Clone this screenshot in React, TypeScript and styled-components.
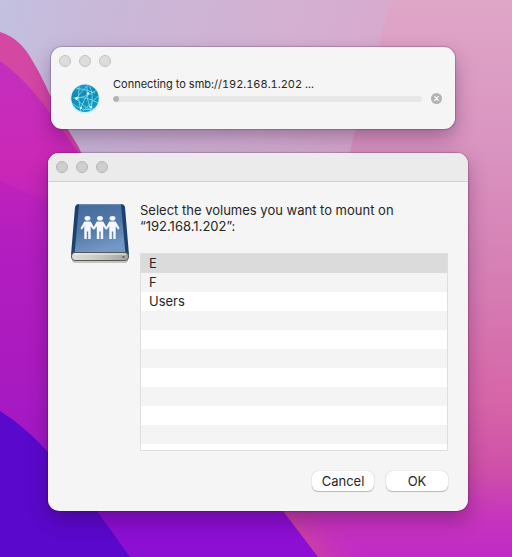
import React, { useState } from "react";
import styled, { createGlobalStyle } from "styled-components";

const GlobalStyle = createGlobalStyle`
  *, *::before, *::after { box-sizing: border-box; }
  body {
    margin: 0;
    font-family: Inter, "Liberation Sans", sans-serif;
    color: #262626;
  }
  button { font: inherit; color: inherit; padding: 0; border: 0; background: none; }
`;

const Desktop = styled.main`
  position: relative;
  isolation: isolate;
  min-height: 100vh;
  display: flex;
  flex-direction: column;
  gap: 24px;
  padding: 47px 44px 46px 48px;
  overflow: hidden;
`;

const WallpaperArt = styled.svg`
  position: absolute;
  inset: 0;
  z-index: -1;
  width: 100%;
  height: 100%;
`;

const Window = styled.section<{ $inset?: boolean }>`
  background: #f5f5f5;
  border-radius: 11px;
  margin: ${(p) => (p.$inset ? "0 13px 0 3px" : "0")};
  overflow: hidden;
  box-shadow: 0 0 1px 1px rgba(40, 0, 50, 0.2), 0 9px 20px rgba(40, 0, 50, 0.32);
`;

const TitleBar = styled.header<{ $filled?: boolean }>`
  display: flex;
  gap: 8px;
  padding: 8px;
  height: ${(p) => (p.$filled ? "29px" : "28px")};
  background: ${(p) => (p.$filled ? "#ebebeb" : "transparent")};
  border-bottom: ${(p) => (p.$filled ? "1px solid #d0d0d0" : "0")};
`;

const Light = styled.button<{ $dark?: boolean }>`
  width: 12px;
  height: 12px;
  border-radius: 50%;
  && { border: 1px solid ${(p) => (p.$dark ? "#b5b5b5" : "#c1c1c1")}; }
  && { background: ${(p) => (p.$dark ? "#cecece" : "#dddddd")}; }
`;

const ProgressBody = styled.div`
  display: flex;
  gap: 14px;
  padding: 2px 13px 15px 20px;
`;

const ProgressColumn = styled.div`
  flex: 1;
  display: flex;
  flex-direction: column;
`;

const StatusLabel = styled.label`
  font-size: 11px;
  line-height: 14px;
  font-variant-numeric: tabular-nums;
`;

const ProgressLine = styled.div`
  display: flex;
  align-items: center;
  gap: 9px;
  height: 15px;
`;

const Bar = styled.progress`
  appearance: none;
  flex: 1;
  min-width: 0;
  height: 6px;
  border: 0;
  border-radius: 3px;
  overflow: hidden;
  background: #e7e7e7;
  &::-webkit-progress-bar { background: #e7e7e7; border-radius: 3px; }
  &::-webkit-progress-value { background: #b4b4b4; border-radius: 3px; }
`;

const StopButton = styled.button`
  display: flex;
  width: 11px;
  height: 11px;
`;

const GlobeArt = styled.svg`
  width: 28px;
  height: 30px;
  margin-top: 7px;
  overflow: visible;
`;

const DialogBody = styled.div`
  display: flex;
  gap: 10px;
  padding: 20px 20px 20px 22px;
`;

const DriveArt = styled.svg`
  flex: none;
  width: 60px;
  height: 64px;
  overflow: visible;
`;

const DialogColumn = styled.form`
  flex: 1;
  min-width: 0;
`;

const Prompt = styled.h1`
  margin: 0 0 19px;
  font-size: 13px;
  font-weight: 400;
  line-height: 16px;
`;

const VolumeList = styled.ul`
  list-style: none;
  margin: 0;
  padding: 0;
  height: 198px;
  overflow: auto;
  border: 1px solid #dedede;
  background: repeating-linear-gradient(#fff 0 19px, #f4f4f4 19px 38px);
`;

const VolumeRow = styled.button<{ $selected: boolean }>`
  display: block;
  width: 100%;
  height: 19px;
  && { padding: 0 8px; }
  && { background: ${(p) => (p.$selected ? "#dbdbdb" : "transparent")}; }
  font-size: 13px;
  line-height: 19px;
  text-align: left;
`;

const Actions = styled.div`
  display: flex;
  justify-content: flex-end;
  gap: 12px;
  padding-top: 20px;
`;

const PushButton = styled.button`
  width: 62px;
  height: 20px;
  border-radius: 6px;
  && { background: #fff; font-size: 13px; line-height: 20px; }
  box-shadow: 0 0 1px rgba(0, 0, 0, 0.3), 0 1px 1px rgba(0, 0, 0, 0.22);
`;

function Wallpaper() {
  return (
    <WallpaperArt viewBox="0 0 512 557" preserveAspectRatio="none" aria-hidden="true">
      <defs>
        <linearGradient id="sky" gradientUnits="userSpaceOnUse" x1="0" y1="0" x2="400" y2="100">
          <stop offset="0" stopColor="#c3c0e0" />
          <stop offset="0.25" stopColor="#c9b8d8" />
          <stop offset="0.7" stopColor="#d4b0d2" />
          <stop offset="1" stopColor="#d8a8cd" />
        </linearGradient>
        <linearGradient id="rose" x1="0" y1="0" x2="0" y2="1">
          <stop offset="0" stopColor="#dfa6c7" />
          <stop offset="0.25" stopColor="#da95c1" />
          <stop offset="0.5" stopColor="#d67eb4" />
          <stop offset="0.72" stopColor="#d765a8" />
          <stop offset="0.84" stopColor="#cf51a8" />
          <stop offset="0.93" stopColor="#c634bd" />
          <stop offset="1" stopColor="#c02bc6" />
        </linearGradient>
        <linearGradient id="ridge" x1="0" y1="0" x2="0.4" y2="1">
          <stop offset="0" stopColor="#d548a2" />
          <stop offset="1" stopColor="#cf3eaf" />
        </linearGradient>
        <linearGradient id="hill" gradientUnits="userSpaceOnUse" x1="0" y1="60" x2="0" y2="440">
          <stop offset="0" stopColor="#c42fbd" />
          <stop offset="0.28" stopColor="#cb27b7" />
          <stop offset="0.5" stopColor="#b31fbe" />
          <stop offset="0.8" stopColor="#a91bbd" />
          <stop offset="1" stopColor="#9d17c8" />
        </linearGradient>
        <linearGradient id="ember" gradientUnits="userSpaceOnUse" x1="300" y1="545" x2="335" y2="518">
          <stop offset="0" stopColor="#cb439a" />
          <stop offset="1" stopColor="#c634bd" stopOpacity="0" />
        </linearGradient>
      </defs>
      <path fill="url(#sky)" d="M0 0H512V557H0Z" />
      <path fill="url(#rose)" d="M393 0Q384 18 380 43Q366 94 352 143L270 500L310 557H512V0Z" />
      <path fill="url(#ember)" d="M270 495L400 495L430 557H316Z" />
      <path fill="url(#ridge)" d="M0 32Q20 38 32 60Q46 83 56 110L78 146L120 230V400H0Z" />
      <path fill="url(#hill)" d="M0 61Q25 78 50 113L78 152L130 260V500H0Z" />
      <path fill="#b119c4" fillOpacity="0.3" d="M0 181L60 208V440H0Z" />
      <path fill="#8c0fd3" d="M60 460H243L283 511L318 557H80Z" />
      <path fill="#5a08cc" d="M0 411Q24 426 46 450Q76 479 97 511L130 557H0Z" />
    </WallpaperArt>
  );
}

function Globe() {
  return (
    <GlobeArt viewBox="0 0 28 30" aria-hidden="true">
      <defs>
        <linearGradient id="ocean" x1="0" y1="0" x2="0.3" y2="1">
          <stop offset="0" stopColor="#22a0dc" />
          <stop offset="0.4" stopColor="#1488b0" />
          <stop offset="1" stopColor="#159bc4" />
        </linearGradient>
        <clipPath id="globeClip"><circle cx="14" cy="14.5" r="13.6" /></clipPath>
      </defs>
      <circle cx="14" cy="15" r="14.4" fill="#c2f4fb" />
      <circle cx="14" cy="14.3" r="13.7" fill="url(#ocean)" />
      <g clipPath="url(#globeClip)" fill="none" stroke="#7fe0f0" strokeWidth="0.8">
        <path d="M2 14Q12 15 26 6M8 2Q6 14 10 28M18 0Q9 9 5 15Q12 22 21 27M18 1Q24 11 19 28M5 14Q15 12 27 19M12 27Q20 20 27 12M16 3Q15 14 19 24M9 26Q13 15 17 10M1 19Q12 29 25 24M4 4Q14 5 24 9" />
      </g>
      <g fill="#dcffff">
        <circle cx="5.5" cy="14.5" r="1.4" />
        <circle cx="17" cy="9.5" r="1.3" />
        <circle cx="20" cy="23" r="1.3" />
        <circle cx="10" cy="24" r="1.1" />
      </g>
    </GlobeArt>
  );
}

function Person({ x }: { x: number }) {
  return (
    <g transform={`translate(${x} 1)`}>
      <ellipse cx="0" cy="15.300" rx="2.900" ry="2.400" />
      <path d="M-3.200 18.500H3.200L7 25.300L5.700 26.700L3.200 23.300V36H0.700V28.500H-0.700V36H-3.200V23.300L-5.700 26.700L-7 25.300Z" />
    </g>
  );
}

function SharedDrive() {
  return (
    <DriveArt viewBox="0 0 60 64" aria-hidden="true">
      <defs>
        <linearGradient id="cover" x1="0" y1="0" x2="0.3" y2="1">
          <stop offset="0" stopColor="#456b9b" />
          <stop offset="0.55" stopColor="#5379aa" />
          <stop offset="1" stopColor="#7498c6" />
        </linearGradient>
        <linearGradient id="metal" x1="0" y1="0" x2="1" y2="0">
          <stop offset="0" stopColor="#dedfdc" />
          <stop offset="0.5" stopColor="#c4c6c1" />
          <stop offset="1" stopColor="#a2a49f" />
        </linearGradient>
      </defs>
      <rect x="2" y="55" width="56" height="6" rx="3" fill="#000" opacity="0.2" />
      <path fill="#1d416f" d="M9 2H51Q54 2 55 5L59 53H1L5 5Q6 2 9 2Z" />
      <path fill="url(#cover)" d="M9 3H51L55.500 52H4.500Z" />
      <path stroke="#8ba8ca" strokeWidth="0.8" d="M9 2.600H51" />
      <rect x="1.500" y="50.500" width="57" height="8" rx="3.500" fill="url(#metal)" stroke="#555856" />
      <path stroke="#f2f3f0" strokeWidth="1" d="M4 52H56" />
      <circle cx="53.500" cy="55" r="1.100" fill="#555" />
      <g fill="#f6f7ff">
        <Person x={17.5} />
        <Person x={30} />
        <Person x={42.5} />
      </g>
    </DriveArt>
  );
}

function WindowLights({ dark }: { dark?: boolean }) {
  return (
    <>
      {["Close", "Minimize", "Zoom"].map((name) => (
        <Light key={name} type="button" aria-label={name} $dark={dark} />
      ))}
    </>
  );
}

const volumes = ["E", "F", "Users"];

export default function App() {
  const [selected, setSelected] = useState("E");
  return (
    <>
      <GlobalStyle />
      <Desktop>
        <Wallpaper />
        <Window $inset>
          <TitleBar><WindowLights /></TitleBar>
          <ProgressBody>
            <Globe />
            <ProgressColumn>
              <StatusLabel htmlFor="connection">Connecting to smb://192.168.1.202 ...</StatusLabel>
              <ProgressLine>
                <Bar id="connection" max={100} value={2} />
                <StopButton type="button" aria-label="Stop connecting">
                  <svg width="11" height="11" viewBox="0 0 11 11" aria-hidden="true">
                    <circle cx="5.500" cy="5.500" r="5.500" fill="#b3b3b3" />
                    <path d="M3.700 3.700L7.300 7.300M7.300 3.700L3.700 7.300" stroke="#fff" strokeWidth="1.200" strokeLinecap="round" />
                  </svg>
                </StopButton>
              </ProgressLine>
            </ProgressColumn>
          </ProgressBody>
        </Window>
        <Window>
          <TitleBar $filled><WindowLights dark /></TitleBar>
          <DialogBody>
            <SharedDrive />
            <DialogColumn onSubmit={(e) => e.preventDefault()}>
              <Prompt>Select the volumes you want to mount on “192.168.1.202”:</Prompt>
              <VolumeList aria-label="Volumes">
                {volumes.map((name) => (
                  <li key={name}>
                    <VolumeRow
                      type="button"
                      $selected={name === selected}
                      aria-pressed={name === selected}
                      onClick={() => setSelected(name)}
                    >
                      {name}
                    </VolumeRow>
                  </li>
                ))}
              </VolumeList>
              <Actions>
                <PushButton type="button">Cancel</PushButton>
                <PushButton type="submit">OK</PushButton>
              </Actions>
            </DialogColumn>
          </DialogBody>
        </Window>
      </Desktop>
    </>
  );
}
